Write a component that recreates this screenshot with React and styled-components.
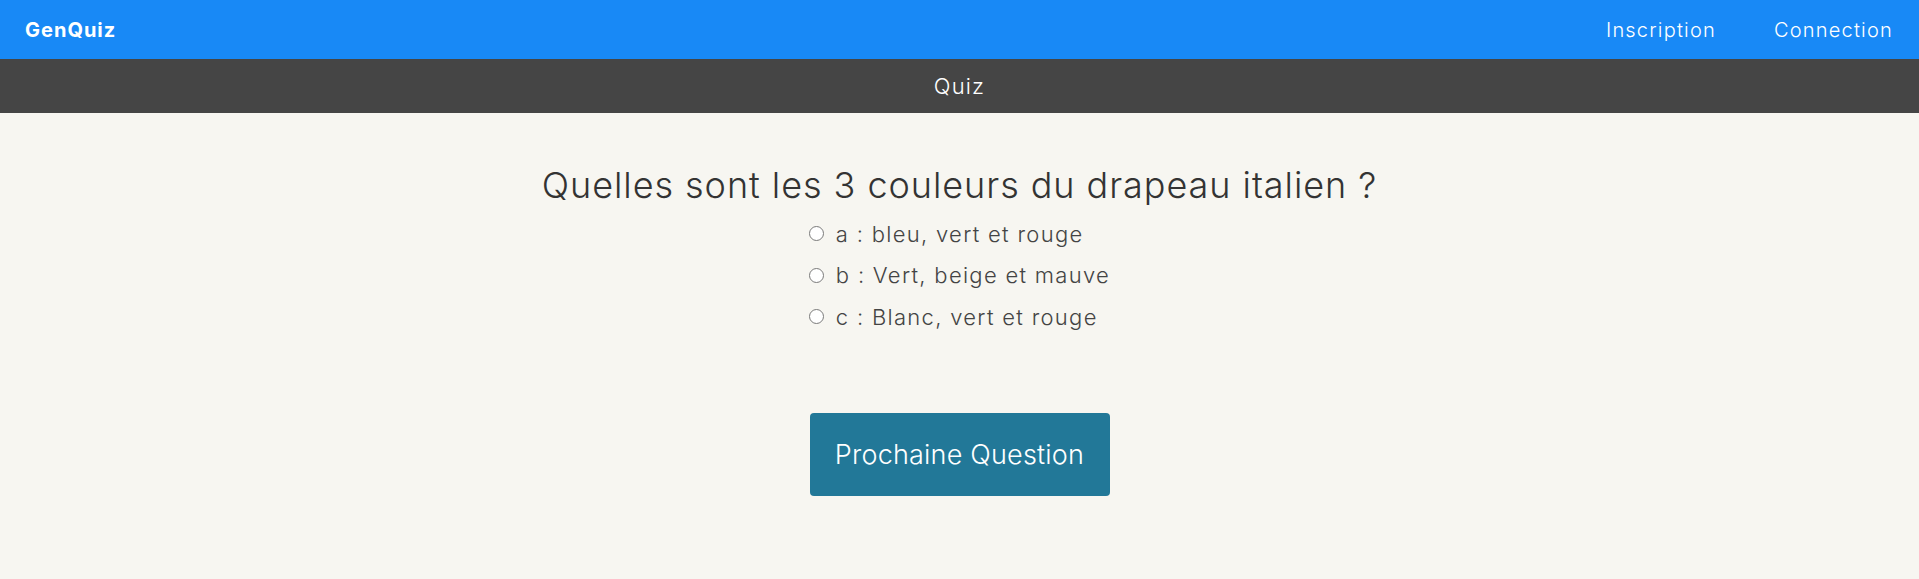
import React, { useState } from "react";
import styled, { createGlobalStyle } from "styled-components";

const Global = createGlobalStyle`
  html, body { margin: 0; padding: 0; background: #f7f6f1; }
  body { font-family: Inter, "Open Sans", sans-serif; }
  * { box-sizing: border-box; }
`;

const NavBar = styled.header`
  height: 59px;
  background: #1889f6;
  display: flex;
  align-items: center;
  justify-content: space-between;
  padding: 0 26px 0 25px;
  color: #fff;
`;

const Brand = styled.div`
  font-size: 20px;
  font-weight: 700;
  letter-spacing: 1px;
`;

const NavLinks = styled.nav`
  display: flex;
  gap: 58px;
`;

const NavLink = styled.a`
  color: #fff;
  text-decoration: none;
  font-size: 20px;
  font-weight: 300;
  letter-spacing: 1.2px;
  cursor: pointer;
`;

const SubBar = styled.div`
  height: 54px;
  background: #454545;
  color: #fff;
  display: flex;
  align-items: center;
  justify-content: center;
  font-size: 22px;
  font-weight: 300;
  letter-spacing: 1.2px;
`;

const Main = styled.main`
  display: flex;
  flex-direction: column;
  align-items: center;
  padding-top: 51px;
`;

const Question = styled.h2`
  margin: 0;
  font-size: 36px;
  line-height: 43px;
  font-weight: 300;
  letter-spacing: 0.95px;
  color: #333;
`;

const Options = styled.ul`
  list-style: none;
  margin: 6px 0 0;
  padding: 0;
`;

const Option = styled.li`
  display: flex;
  align-items: center;
  height: 41.5px;
  font-size: 22px;
  font-weight: 300;
  letter-spacing: 1.3px;
  color: #444;
`;

const Radio = styled.span`
  width: 15px;
  height: 15px;
  border-radius: 50%;
  border: 1.5px solid #7a7a7a;
  background: ${(p) => (p.$checked ? "#1889f6" : "#fff")};
  margin-right: 12px;
  flex-shrink: 0;
`;

const NextButton = styled.button`
  margin-top: 75px;
  width: 300px;
  height: 83px;
  background: #227898;
  border: none;
  border-radius: 4px;
  color: #fff;
  font-family: inherit;
  font-size: 27px;
  font-weight: 300;
  letter-spacing: 0.2px;
  cursor: pointer;
`;

const options = [
  "a : bleu, vert et rouge",
  "b : Vert, beige et mauve",
  "c : Blanc, vert et rouge",
];

export default function App() {
  const [sel, setSel] = useState(null);
  return (
    <>
      <Global />
      <NavBar>
        <Brand>GenQuiz</Brand>
        <NavLinks>
          <NavLink>Inscription</NavLink>
          <NavLink>Connection</NavLink>
        </NavLinks>
      </NavBar>
      <SubBar>Quiz</SubBar>
      <Main>
        <Question>Quelles sont les 3 couleurs du drapeau italien ?</Question>
        <Options>
          {options.map((o, i) => (
            <Option key={i} onClick={() => setSel(i)}>
              <Radio $checked={sel === i} />
              {o}
            </Option>
          ))}
        </Options>
        <NextButton>Prochaine Question</NextButton>
      </Main>
    </>
  );
}
